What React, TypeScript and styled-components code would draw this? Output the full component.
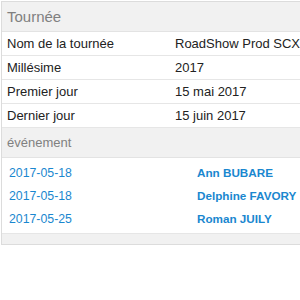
import React from "react";
import styled, { createGlobalStyle } from "styled-components";

const Global = createGlobalStyle`
  html, body { margin: 0; padding: 0; background: #fff; overflow: hidden; }
  body { font-family: "Liberation Sans", Arial, Helvetica, sans-serif; }
`;

const Panel = styled.div`
  margin: 1px 0 0 1px;
  border: 1px solid #dcdcdc;
  border-right: none;
  background: #f1f1f1;
  padding-bottom: 10px;
  overflow: hidden;
`;

const SectionHeader = styled.div<{ $size: number; $h: number }>`
  height: ${(p) => p.$h}px;
  display: flex;
  align-items: center;
  padding: 0 5px;
  background: #f1f1f1;
  color: #808080;
  font-size: ${(p) => p.$size}px;
  font-weight: 300;
  border-bottom: 1px solid #e3e3e3;
`;

const Row = styled.div`
  display: grid;
  grid-template-columns: 168px 1fr;
  height: 23px;
  align-items: center;
  background: #fff;
  border-bottom: 1px solid #e6e6e6;
  font-size: 13px;
  color: #222;
`;

const Cell = styled.div`
  padding: 0 5px;
  white-space: nowrap;
  overflow: hidden;
`;

const LinkList = styled.div`
  background: #fff;
  padding: 3px 0 3px;
  border-bottom: 1px solid #e6e6e6;
`;

const LinkRow = styled.div`
  display: grid;
  grid-template-columns: 188px 1fr;
  height: 23px;
  align-items: center;
  color: #1a87cf;
`;

const DateLink = styled.a`
  padding: 0 7px;
  font-size: 12.3px;
  color: inherit;
  text-decoration: none;
  white-space: nowrap;
`;

const NameLink = styled.a`
  padding: 0 7px;
  font-size: 11.7px;
  font-weight: 700;
  color: inherit;
  text-decoration: none;
  white-space: nowrap;
  overflow: hidden;
`;

const info: [string, string][] = [
  ["Nom de la tournée", "RoadShow Prod SCX"],
  ["Millésime", "2017"],
  ["Premier jour", "15 mai 2017"],
  ["Dernier jour", "15 juin 2017"],
];

const events: [string, string][] = [
  ["2017-05-18", "Ann BUBARE"],
  ["2017-05-18", "Delphine FAVORY"],
  ["2017-05-25", "Roman JUILY"],
];

export default function App() {
  return (
    <>
      <Global />
      <Panel>
        <SectionHeader $size={15} $h={29}>Tournée</SectionHeader>
        {info.map(([k, v]) => (
          <Row key={k}>
            <Cell>{k}</Cell>
            <Cell>{v}</Cell>
          </Row>
        ))}
        <SectionHeader $size={13} $h={29}>événement</SectionHeader>
        <LinkList>
          {events.map(([d, n], i) => (
            <LinkRow key={i}>
              <DateLink href="#">{d}</DateLink>
              <NameLink href="#">{n}</NameLink>
            </LinkRow>
          ))}
        </LinkList>
      </Panel>
    </>
  );
}
